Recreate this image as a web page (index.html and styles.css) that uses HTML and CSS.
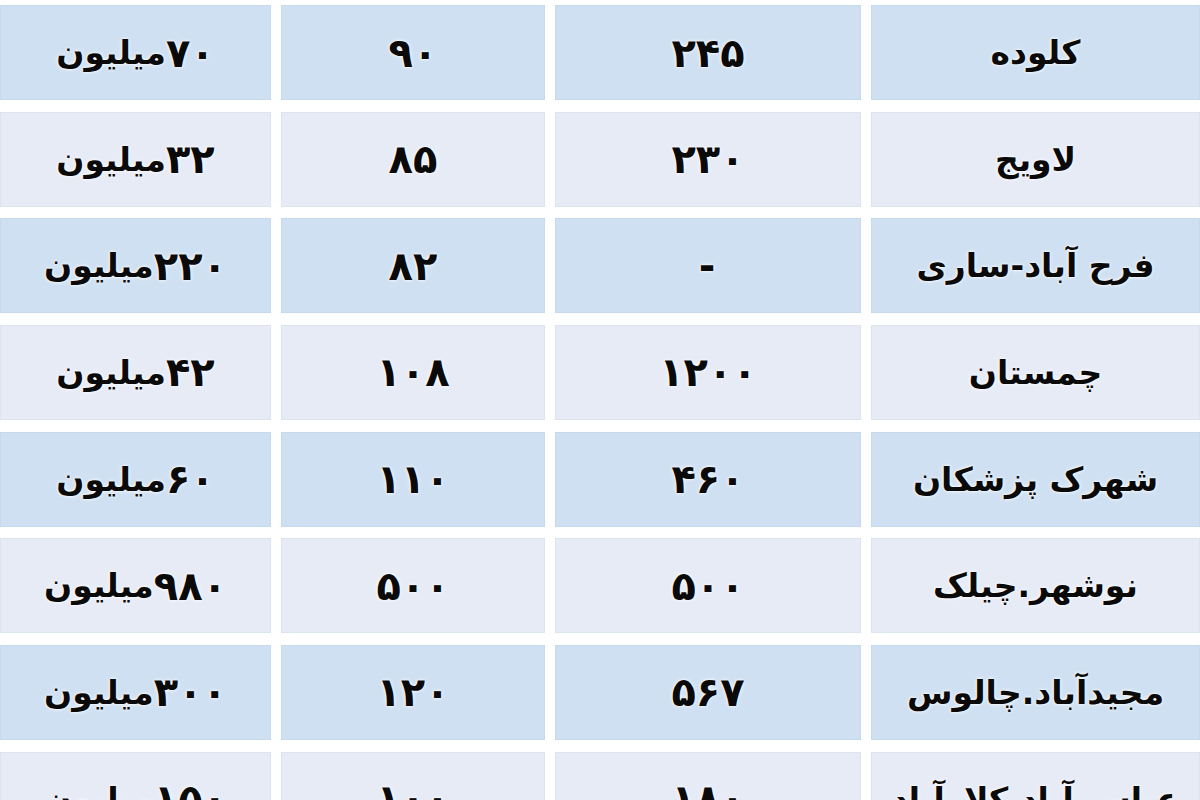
FILE: index.html
```html
<!DOCTYPE html>
<html lang="fa" dir="rtl">
<head>
<meta charset="utf-8">
<title>جدول</title>
<link rel="stylesheet" href="styles.css">
</head>
<body>
<div class="table">
  <div class="cell blue">کلوده</div>
  <div class="cell blue num">۲۴۵</div>
  <div class="cell blue num">۹۰</div>
  <div class="cell blue"><span class="num">۷۰</span>میلیون</div>

  <div class="cell light">لاویج</div>
  <div class="cell light num">۲۳۰</div>
  <div class="cell light num">۸۵</div>
  <div class="cell light"><span class="num">۳۲</span>میلیون</div>

  <div class="cell blue">فرح آباد-ساری</div>
  <div class="cell blue num">-</div>
  <div class="cell blue num">۸۲</div>
  <div class="cell blue"><span class="num">۲۲۰</span>میلیون</div>

  <div class="cell light">چمستان</div>
  <div class="cell light num">۱۲۰۰</div>
  <div class="cell light num">۱۰۸</div>
  <div class="cell light"><span class="num">۴۲</span>میلیون</div>

  <div class="cell blue">شهرک پزشکان</div>
  <div class="cell blue num">۴۶۰</div>
  <div class="cell blue num">۱۱۰</div>
  <div class="cell blue"><span class="num">۶۰</span>میلیون</div>

  <div class="cell light">نوشهر.چیلک</div>
  <div class="cell light num">۵۰۰</div>
  <div class="cell light num">۵۰۰</div>
  <div class="cell light"><span class="num">۹۸۰</span>میلیون</div>

  <div class="cell blue">مجیدآباد.چالوس</div>
  <div class="cell blue num">۵۶۷</div>
  <div class="cell blue num">۱۲۰</div>
  <div class="cell blue"><span class="num">۳۰۰</span>میلیون</div>

  <div class="cell light">عباس آباد.کلارآباد</div>
  <div class="cell light num">۱۸۰</div>
  <div class="cell light num">۱۰۰</div>
  <div class="cell light"><span class="num">۱۵۰</span>میلیون</div>
</div>
</body>
</html>
```
FILE: styles.css
```css
html, body {
  margin: 0;
  padding: 0;
  background: #ffffff;
  overflow: hidden;
}

body {
  width: 1200px;
  height: 800px;
}

.table {
  direction: rtl;
  display: grid;
  grid-template-columns: 329px 306px 264px 271px;
  grid-auto-rows: 95px;
  column-gap: 10px;
  row-gap: 11.67px;
  padding-top: 5px;
  font-family: "DejaVu Sans", "Noto Sans", sans-serif;
  font-weight: bold;
  font-size: 33px;
  color: #0a0a0a;
}

.cell {
  display: flex;
  align-items: center;
  justify-content: center;
  white-space: nowrap;
  text-shadow: 0 0 2px #ffffff, 0 0 4px rgba(255, 255, 255, 0.9);
  box-shadow: inset 0 0 0 1px rgba(120, 140, 170, 0.08);
}

.num {
  font-size: 40px;
  letter-spacing: 2px;
}

.blue {
  background: #cfe0f2;
}

.light {
  background: #e7ebf6;
}
```
